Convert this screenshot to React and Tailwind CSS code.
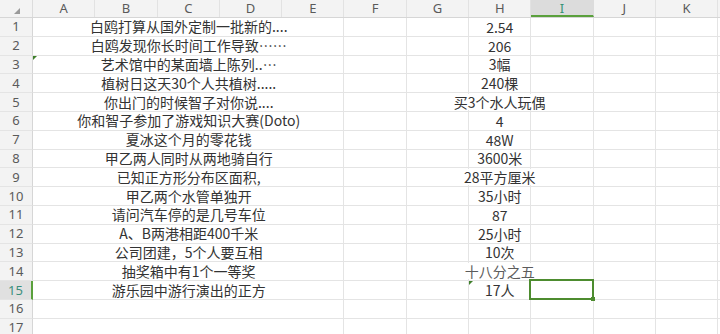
import React from 'react';

const COLS = ['A', 'B', 'C', 'D', 'E', 'F', 'G', 'H', 'I', 'J', 'K'];

const ROWS = [
  ['白鸥打算从国外定制一批新的....', '2.54'],
  ['白鸥发现你长时间工作导致……', '206'],
  ['艺术馆中的某面墙上陈列..…', '3幅'],
  ['植树日这天30个人共植树.....', '240棵'],
  ['你出门的时候智子对你说....', '买3个水人玩偶'],
  ['你和智子参加了游戏知识大赛(Doto)', '4'],
  ['夏冰这个月的零花钱', '48W'],
  ['甲乙两人同时从两地骑自行', '3600米'],
  ['已知正方形分布区面积,', '28平方厘米'],
  ['甲乙两个水管单独开', '35小时'],
  ['请问汽车停的是几号车位', '87'],
  ['A、B两港相距400千米', '25小时'],
  ['公司团建，5个人要互相', '10次'],
  ['抽奖箱中有1个一等奖', '十八分之五'],
  ['游乐园中游行演出的正方', '17人'],
  ['', ''],
  ['', ''],
];

const cjk = { fontFamily: '"Noto Sans CJK SC", "Noto Sans", sans-serif' };
const head = { fontFamily: '"Noto Sans", "Open Sans", sans-serif' };

const Triangle = () => (
  <span className="absolute left-0 top-0 w-0 h-0 border-t-[4px] border-r-[4px] border-t-[#3e7f2a] border-r-transparent z-20" />
);

const HeaderRow = () => (
  <div className="flex h-[18px] bg-[#f3f3f3] border-b border-[#d6d6d6] text-[13px] leading-none text-[#5a5a5a]" style={head}>
    <div className="w-[33px] shrink-0 border-r border-[#dcdcdc] relative">
      <span className="absolute left-[14px] top-[8px] w-0 h-0 border-b-[6px] border-l-[6px] border-b-[#9a9a9a] border-l-transparent" />
    </div>
    {COLS.map((c) => (
      <div
        key={c}
        className={
          c === 'I'
            ? 'w-[62.3px] shrink-0 flex items-center justify-center pt-[1px] bg-[#dcdcdc] text-[#3a9477] border-r border-[#dcdcdc] border-b-2 border-b-[#5aa03c]'
            : 'w-[62.3px] shrink-0 flex items-center justify-center border-r border-[#e2e2e2]'
        }
      >
        {c}
      </div>
    ))}
    <div className="flex-1" />
  </div>
);

const Row = ({ n, b, h }) => {
  const sel = n === 15;
  return (
    <div className="flex h-[18.8px] text-[14px] text-[#333]" style={cjk}>
      <div
        className={
          sel
            ? 'w-[33px] shrink-0 flex items-center justify-center leading-none bg-[#e0e0e0] text-[#3a8f7c] text-[13px] border-b border-[#e4e4e4] border-r-2 border-r-[#5aa03c]'
            : 'w-[33px] shrink-0 flex items-center justify-center leading-none bg-[#f3f3f3] text-[#5a5a5a] text-[13px] border-b border-[#e4e4e4] border-r border-r-[#d6d6d6]'
        }
        style={head}
      >
        {n}
      </div>
      <div className="w-[62.3px] shrink-0 border-b border-[#e4e4e4] relative">{n === 3 && <Triangle />}</div>
      <div className="w-[186.9px] shrink-0 border-b border-[#e4e4e4] flex items-center justify-center whitespace-nowrap">
        <span className="relative z-10">{b}</span>
      </div>
      <div className="w-[62.3px] shrink-0 border-b border-r border-[#e4e4e4]" />
      <div className="w-[62.3px] shrink-0 border-b border-r border-[#e4e4e4]" />
      <div className="w-[62.3px] shrink-0 border-b border-r border-[#e4e4e4]" />
      <div className="w-[62.3px] shrink-0 border-b border-r border-[#e4e4e4] relative flex items-center justify-center whitespace-nowrap">
        {n === 15 && <Triangle />}
        {h && (
          <span className={n === 14 ? 'relative z-10 bg-white leading-[16px] text-[#5c5c5c]' : 'relative z-10 bg-white leading-[16px]'}>
            {h}
          </span>
        )}
      </div>
      <div className="w-[62.3px] shrink-0 border-b border-r border-[#e4e4e4] relative">
        {sel && (
          <div className="absolute -left-[2px] -top-[2px] -right-[1px] -bottom-[1px] border-2 border-[#4d8c2f] z-30">
            <span className="absolute -right-[3px] -bottom-[3px] w-[4px] h-[4px] bg-[#4d8c2f]" />
          </div>
        )}
      </div>
      <div className="w-[62.3px] shrink-0 border-b border-r border-[#e4e4e4]" />
      <div className="w-[62.3px] shrink-0 border-b border-r border-[#e4e4e4]" />
      <div className="flex-1 border-b border-[#e4e4e4]" />
    </div>
  );
};

export default function App() {
  return (
    <div className="w-[720px] h-[334px] overflow-hidden bg-white">
      <HeaderRow />
      {ROWS.map(([b, h], i) => (
        <Row key={i} n={i + 1} b={b} h={h} />
      ))}
    </div>
  );
}
